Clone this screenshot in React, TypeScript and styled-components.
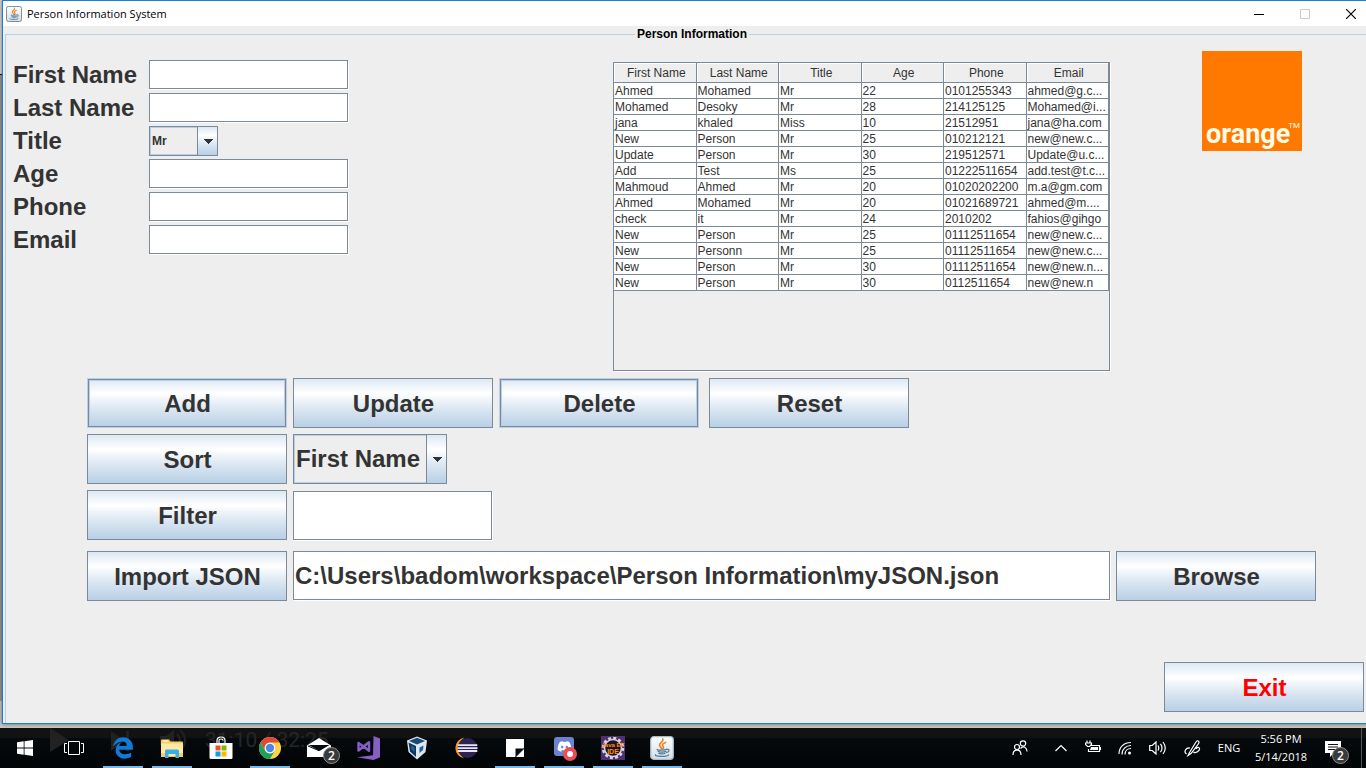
import React from "react";
import styled, { createGlobalStyle, css } from "styled-components";
import { FaDiscord, FaEdgeLegacy } from "react-icons/fa6";

const steel = "#7a8a99";
const sky = "#b8cfe5";
const panel = "#eeeeee";
const ink = "#333333";
const swing = `"Liberation Sans", Arial, sans-serif`;
const system = `"Open Sans", "Noto Sans", sans-serif`;
const ocean = `linear-gradient(#dde8f3, #ffffff 30%, #dde8f3 60%, ${sky})`;

const GlobalStyle = createGlobalStyle`
  * { box-sizing: border-box; }
  body { margin: 0; background: #bdbdbd; font-family: ${swing}; color: ${ink}; }
  button, input, select { font-family: inherit; color: inherit; margin: 0; border-radius: 0; }
`;

const Desktop = styled.div`
  display: flex;
  flex-direction: column;
  min-height: 100vh;
  overflow: hidden;
  padding-left: 2px;
  background: linear-gradient(#d8d8d8 74px, #111 74px, #111 75px, #999 75px, #999 701px, #c8c8c8 701px);
`;

/* The window runs past the right edge of the screen. */
const Window = styled.main`
  flex: 1;
  display: flex;
  flex-direction: column;
  margin: 0 -12px 4px 0;
  border: 1px solid #1a7fd4;
  border-right: 0;
  background: ${panel};
  box-shadow: 0 0 4px rgba(0, 0, 0, 0.5);
`;

const TitleBar = styled.header`
  display: flex;
  align-items: center;
  height: 25px;
  padding: 0 4px 0 3px;
  background: #fff;
`;

const WindowTitle = styled.h1`
  flex: 1;
  margin: 0 0 0 5px;
  font: 400 11px/16px ${system};
  color: #000;
`;

const WindowControl = styled.button`
  display: grid;
  place-items: center;
  width: 46px;
  height: 25px;
  padding: 0;
  border: 0;
  background: none;
`;

const Panel = styled.fieldset`
  flex: 1;
  display: flex;
  flex-direction: column;
  min-width: 0;
  margin: 0 0 0 2px;
  padding: 0;
  border: solid ${sky};
  border-width: 1px 0 0 1px;
`;

const PanelTitle = styled.legend`
  margin: 0 auto;
  padding: 0 2px;
  font: 700 12px/17px ${swing};
  color: #000;
`;

const Content = styled.div`
  flex: 1;
  display: flex;
  flex-direction: column;
  padding-bottom: 11px;
`;

const Overview = styled.section`
  display: flex;
  align-items: flex-start;
`;

const Form = styled.form`
  display: grid;
  grid-template-columns: 136px 200px;
  grid-auto-rows: 30px;
  row-gap: 3px;
  flex: 0 1 607px;
  margin-top: 17px;
  padding-left: 7px;
`;

const Label = styled.label`
  align-self: center;
  font: 700 24px/28px ${swing};
`;

const TextField = styled.input<{ $large?: boolean }>`
  width: ${(p) => (p.$large ? "auto" : "199px")};
  min-width: 0;
  height: 29px;
  padding: 0 1px;
  border: 1px solid ${steel};
  background: #fff;
  box-shadow: 1px 1px 0 #fff;
  outline: none;
  font-size: 12px;
  ${(p) =>
    p.$large &&
    css`
      flex: 1;
      height: 49px;
      font: 700 24px/28px ${swing};
    `}
`;

const FilterField = styled(TextField)`
  flex: 0 0 199px;
  align-self: flex-end;
`;

const Combo = styled.div<{ $large?: boolean }>`
  position: relative;
  width: ${(p) => (p.$large ? 154 : 69)}px;
  height: ${(p) => (p.$large ? 50 : 30)}px;
  border: 1px solid ${steel};
`;

const ComboSelect = styled.select<{ $large?: boolean }>`
  appearance: none;
  width: 100%;
  height: 100%;
  padding: 0 20px 0 1px;
  border: 1px solid ${sky};
  background: ${panel};
  outline: none;
  font: 700 ${(p) => (p.$large ? "24px/28px" : "12px/16px")} ${swing};
`;

const ComboArrow = styled.span`
  position: absolute;
  inset: 0 0 0 auto;
  display: grid;
  place-items: center;
  width: 20px;
  border-left: 1px solid ${steel};
  background: ${ocean};
  pointer-events: none;
`;

const TablePane = styled.div`
  flex: 0 1 497px;
  height: 309px;
  margin-top: 19px;
  border: 1px solid ${steel};
  box-shadow: 1px 1px 0 #fff;
  overflow: hidden;
`;

const Table = styled.table`
  width: 100%;
  table-layout: fixed;
  border-collapse: separate;
  border-spacing: 0;
  font-size: 12px;
  line-height: 13px;
`;

const HeadCell = styled.th`
  height: 20px;
  padding: 2px 0 0 3px;
  border: solid ${steel};
  border-width: 0 1px 1px 0;
  background: ${panel};
  box-shadow: inset 1px 1px 0 #fff;
  font-weight: 400;
`;

const Cell = styled.td`
  height: 16px;
  padding: 2px 0 0 1px;
  border: solid ${steel};
  border-width: 0 1px 1px 0;
  background: #fff;
  white-space: nowrap;
  overflow: hidden;
`;

const Logo = styled.div`
  display: flex;
  align-items: flex-end;
  width: 100px;
  height: 100px;
  margin: 8px 0 0 92px;
  padding: 0 0 1px 4px;
  background: #ff7900;
  color: #fffbe6;
  font: 700 27px/32px Roboto, sans-serif;
`;

const Trademark = styled.sup`
  margin: 0 0 18px -2px;
  font: 400 8px/12px Roboto, sans-serif;
`;

const Actions = styled.section`
  display: flex;
  flex-direction: column;
  gap: 6px;
  margin-top: 7px;
  padding: 0 62px 0 81px;
`;

const Row = styled.div<{ $wide?: boolean }>`
  display: flex;
  gap: ${(p) => (p.$wide ? 10 : 6)}px;
`;

const ImportRow = styled(Row)`
  margin-top: 5px;
`;

const Button = styled.button<{ $hot?: boolean; $danger?: boolean }>`
  flex: 0 0 200px;
  width: 200px;
  height: 50px;
  padding: 2px 0 0 1px;
  border: 1px solid ${steel};
  background: ${ocean};
  color: ${(p) => (p.$danger ? "#ff0000" : ink)};
  font: 700 24px/28px ${swing};
  ${(p) =>
    p.$hot &&
    css`
      border-color: ${sky};
      box-shadow: inset 0 0 0 1px ${steel}, inset 0 0 0 2px ${sky};
    `}
`;

const Footer = styled.footer`
  display: flex;
  justify-content: flex-end;
  margin-top: auto;
  padding: 61px 14px 0 0;

  ${Button} {
    flex: none;
  }
`;

const Taskbar = styled.nav`
  position: relative;
  display: flex;
  height: 40px;
  margin-left: -2px;
  background: linear-gradient(#121212 10px, #050a0e 10px, #020405);
  color: #fff;
  font-family: ${system};
`;

const Ghosts = styled.svg`
  position: absolute;
  inset: 0;
  width: 100%;
  height: 100%;
`;

const Apps = styled.div`
  position: relative;
  display: flex;
  gap: 1px;
  flex: 1;
  padding-left: 1px;
`;

const TaskButton = styled.button<{ $open?: boolean }>`
  position: relative;
  display: grid;
  place-items: center;
  width: 48px;
  height: 40px;
  padding: 0;
  border: 0;
  background: ${(p) =>
    p.$open ? "linear-gradient(#76b9ed, #76b9ed) center bottom / 40px 2px no-repeat" : "none"};
`;

const Badge = styled.span<{ $left: number }>`
  position: absolute;
  left: ${(p) => p.$left}px;
  bottom: 4px;
  width: 17px;
  height: 17px;
  border: 1px solid #8c8c8c;
  border-radius: 50%;
  background: #3a3a3a;
  color: #fff;
  font: 600 12px/15px ${system};
  text-align: center;
`;

const Tray = styled.div`
  position: relative;
  display: flex;
`;

const TrayItem = styled.button<{ $w?: number }>`
  position: relative;
  display: grid;
  place-items: center;
  width: ${(p) => p.$w ?? 32}px;
  height: 40px;
  padding: 0;
  border: 0;
  background: none;
  color: #fff;
  font: 400 11px/18px ${system};
`;

const Notifications = styled(TrayItem)`
  padding: 2px 10px 0 0;
`;

const ShowDesktop = styled.button`
  width: 5px;
  padding: 0;
  border: 0;
  border-left: 1px solid #555;
  background: none;
`;

const JavaIcon = ({ size }: { size: number }) => (
  <svg width={size} height={size} viewBox="0 0 24 24" fill="none">
    <defs>
      <linearGradient id={`java${size}`} x1="0" y1="0" x2="0" y2="1">
        <stop offset="0" stopColor="#fff" />
        <stop offset="1" stopColor="#d5dde4" />
      </linearGradient>
    </defs>
    <rect x="0.7" y="0.7" width="22.6" height="22.6" rx="3" fill={`url(#java${size})`} stroke={size < 20 ? "#5d7484" : "#a9bccb"} strokeWidth="1.2" />
    <path d="M12.8 3c1.4 2.4-4 4-3.3 6.300.3 1.300 1.800 2 2 3.300M15.600 6.400c-3.500 1.400-3.600 2.600-2.400 4.100.6.800.3 1.600-.5 2.200" stroke="#ee8122" strokeWidth="1.600" strokeLinecap="round" />
    <path d="M7.300 13.400c-2 .8 7.500 1 9.300-.1M8 15.200c.3 1.200 6.600 1.200 8 0M8.800 17.200c1 .8 5 .8 6.300 0M17 13.400c3-.5 2.600 2.500-.5 3.100M5.500 18.800c-1.500 2 12 2.200 13 .1" stroke="#4b7a9c" strokeWidth="1.200" strokeLinecap="round" />
  </svg>
);

const Arrow = () => (
  <svg width="10" height="5" viewBox="0 0 10 5" shapeRendering="crispEdges">
    <path d="M0 0h10L5 5z" fill={ink} />
  </svg>
);

const StartIcon = () => (
  <svg width="16" height="16" viewBox="0 0 16 16" fill="#fff">
    <path d="M0 2.300 6.700 1.300v6.200H0zM7.500 1.200 16 0v7.500H7.500zM0 8.400h6.700v6.300L0 13.700zM7.500 8.400H16V16l-8.500-1.200z" />
  </svg>
);

const TaskViewIcon = () => (
  <svg width="20" height="16" viewBox="0 0 20 16" fill="none" stroke="#fff">
    <path d="M4.500 1.500h11v13h-11zM3 3.500H.5v9H3M17 3.500h2.500v9H17" />
  </svg>
);

const ExplorerIcon = () => (
  <svg width="22" height="19" viewBox="0 0 22 19">
    <path d="M0 1.500Q0 .5 1 .5h7l1.500 2H21q1 0 1 1V18H0z" fill="#f5cf62" />
    <path d="M2 1.500h5v1H2z" fill="#fff" />
    <path d="M0 4.500h22V17H0z" fill="#ffe9a3" />
    <path d="M4 19v-7q0-1.500 1.500-1.500h11q1.500 0 1.500 1.500v7h-3.500v-4h-7v4z" fill="#3aaee6" />
    <path d="M0 14h4v4H0zM18 14h4v4h-4z" fill="#f5cf62" />
  </svg>
);

const StoreIcon = () => (
  <svg width="24" height="24" viewBox="0 0 24 24">
    <path d="M8 8V4.500C8 2.500 9.500 1 12 1s4 1.500 4 3.500V8M10 7V4.500c0-2 4-2 4 0" fill="none" stroke="#fff" strokeWidth="1.200" />
    <path d="M.5 7h23v14.500q0 1.500-1.500 1.500H2Q.5 23 .5 21.500z" fill="#fff" />
    <path d="M6.500 9.500h5v5h-5z" fill="#f25022" />
    <path d="M12.500 9.500h5v5h-5z" fill="#7fba00" />
    <path d="M6.500 15.500h5v5h-5z" fill="#00a4ef" />
    <path d="M12.500 15.500h5v5h-5z" fill="#ffb900" />
  </svg>
);

const ChromeIcon = () => (
  <svg width="22" height="22" viewBox="0 0 22 22">
    <circle cx="11" cy="11" r="11" fill="#fdd349" />
    <path d="M1.500 5.500A11 11 0 0 1 20.530 5.500H11A5.500 5.500 0 0 0 6.240 13.750z" fill="#db4a3b" />
    <path d="M1.470 5.500A11 11 0 0 0 11 22l4.760-8.250A5.500 5.500 0 0 1 6.240 13.750z" fill="#1fa15d" />
    <circle cx="11" cy="11" r="5.200" fill="#fff" />
    <circle cx="11" cy="11" r="4.200" fill="#4a87e8" />
  </svg>
);

const MailIcon = () => (
  <svg width="24" height="20" viewBox="0 0 24 20">
    <path d="M0 7.500 12 0l12 7.500V19H0z" fill="#fff" />
    <path d="M1.500 7h21L12.500 13z" fill="#060b0f" />
    <path d="M12 12.700 1 8" stroke="#060b0f" />
  </svg>
);

const VisualStudioIcon = () => (
  <svg width="24" height="24" viewBox="0 0 24 24">
    <path d="M17.500 0 24 2.500v18.800L17.500 24 1 21.200l16-2z" fill="#865fc5" />
    <path d="M2.500 7v7.500l5-4zM13 6.300v8.500l-5.500-4.300z" fill="none" stroke="#865fc5" strokeWidth="2.400" strokeLinejoin="round" />
  </svg>
);

const VirtualBoxIcon = () => (
  <svg width="22" height="24" viewBox="0 0 22 24">
    <path d="M11 .5 21 4.500 19.500 16 11 23.500 2.500 16 1 4.500z" fill="#dfe8ef" />
    <path d="M11 1.800 19 4.900 11 8.600 3 4.900z" fill="#164a7c" />
    <path d="M2.500 6.500 10 10v11L4 15.500z" fill="#0d3763" />
    <path d="M19.500 6.500 12 10v11l6-5.500z" fill="#dbe6ee" />
    <path d="m5 9.500 3.500 1.700V16L5.500 13.500z" fill="#2a5f90" />
    <path d="m17.500 9.500-4 2V17l3.500-3z" fill="#2a5f90" />
  </svg>
);

const EclipseIcon = () => (
  <svg width="24" height="22" viewBox="0 0 24 22">
    <path d="M10.500.5A10.600 10.600 0 0 0 10.500 21.500 12.500 12.500 0 0 1 10.500.5z" fill="#f7941e" />
    <circle cx="13.500" cy="11" r="10" fill="#2c2255" />
    <path d="M3.700 7.300h19.600v1.800H3.700zM3.500 10.200h20V12h-20zM3.700 13.100h19.600v1.800H3.700z" fill="#e9e6f4" />
  </svg>
);

const StickyIcon = () => (
  <svg width="18" height="18" viewBox="0 0 18 18">
    <path d="M0 0h18v9l-9 9H0z" fill="#fff" />
    <path d="M9.500 18V9.500H18z" fill="#060b0f" />
    <path d="M18 10v8h-8z" fill="#fff" />
  </svg>
);

const DiscordTile = styled.span`
  position: relative;
  display: grid;
  place-items: center;
  width: 20px;
  height: 19px;
  margin-bottom: 3px;
  border-radius: 3px;
  background: #6d82d0;
  color: #fff;
`;

const RecordDot = styled.span`
  position: absolute;
  right: -3px;
  bottom: -5px;
  width: 14px;
  height: 14px;
  border: 4px solid #ee4c55;
  border-radius: 50%;
  background: #fff;
`;

const JavaEeIcon = () => (
  <svg width="24" height="24" viewBox="0 0 24 24">
    <rect width="24" height="24" fill="#4d2f73" />
    <circle cx="12" cy="12" r="10" fill="none" stroke="#d9d5dd" strokeWidth="2.500" strokeDasharray="3 2.230" />
    <circle cx="12" cy="12" r="8.500" fill="#1d1522" stroke="#d9d5dd" strokeWidth="1.500" />
    <text x="12" y="11" textAnchor="middle" fontFamily="Liberation Sans, sans-serif" fontWeight="700" fontSize="6" fill="#ff8a1e">Java EE</text>
    <text x="12" y="18" textAnchor="middle" fontFamily="Liberation Sans, sans-serif" fontWeight="700" fontSize="7" fill="#ff8a1e">IDE</text>
  </svg>
);

const TrayIcon = ({ w = 16, h = 16, children }: { w?: number; h?: number; children: React.ReactNode }) => (
  <svg width={w} height={h} viewBox={`0 0 ${w} ${h}`} fill="none" stroke="#fff" strokeWidth="1.200">
    {children}
  </svg>
);

const columns = ["First Name", "Last Name", "Title", "Age", "Phone", "Email"];

const people = [
  ["Ahmed", "Mohamed", "Mr", "22", "0101255343", "ahmed@g.c..."],
  ["Mohamed", "Desoky", "Mr", "28", "214125125", "Mohamed@i..."],
  ["jana", "khaled", "Miss", "10", "21512951", "jana@ha.com"],
  ["New", "Person", "Mr", "25", "010212121", "new@new.c..."],
  ["Update", "Person", "Mr", "30", "219512571", "Update@u.c..."],
  ["Add", "Test", "Ms", "25", "01222511654", "add.test@t.c..."],
  ["Mahmoud", "Ahmed", "Mr", "20", "01020202200", "m.a@gm.com"],
  ["Ahmed", "Mohamed", "Mr", "20", "01021689721", "ahmed@m...."],
  ["check", "it", "Mr", "24", "2010202", "fahios@gihgo"],
  ["New", "Person", "Mr", "25", "01112511654", "new@new.c..."],
  ["New", "Personn", "Mr", "25", "01112511654", "new@new.c..."],
  ["New", "Person", "Mr", "30", "01112511654", "new@new.n..."],
  ["New", "Person", "Mr", "30", "0112511654", "new@new.n"],
];

const apps: { name: string; icon: React.ReactNode; open?: boolean }[] = [
  { name: "Start", icon: <StartIcon /> },
  { name: "Task View", icon: <TaskViewIcon /> },
  { name: "Edge", icon: <FaEdgeLegacy size={22} color="#0f7ad8" />, open: true },
  { name: "File Explorer", icon: <ExplorerIcon />, open: true },
  { name: "Store", icon: <StoreIcon /> },
  { name: "Chrome", icon: <ChromeIcon />, open: true },
  { name: "Mail", icon: <><MailIcon /><Badge $left={28}>2</Badge></> },
  { name: "Visual Studio", icon: <VisualStudioIcon /> },
  { name: "VirtualBox", icon: <VirtualBoxIcon /> },
  { name: "Eclipse", icon: <EclipseIcon /> },
  { name: "Sticky Notes", icon: <StickyIcon />, open: true },
  { name: "Discord", icon: <DiscordTile><FaDiscord size={15} /><RecordDot /></DiscordTile>, open: true },
  { name: "Java EE IDE", icon: <JavaEeIcon />, open: true },
  { name: "Java", icon: <JavaIcon size={24} />, open: true },
];

export default function App() {
  return (
    <>
      <GlobalStyle />
      <Desktop>
        <Window>
          <TitleBar>
            <JavaIcon size={16} />
            <WindowTitle>Person Information System</WindowTitle>
            <WindowControl aria-label="Minimize">
              <svg width="10" height="10" stroke="#000"><path d="M0 5.500h10" /></svg>
            </WindowControl>
            <WindowControl aria-label="Maximize" disabled>
              <svg width="10" height="10" fill="none" stroke="#ccc"><path d="M.5.500h9v9h-9z" /></svg>
            </WindowControl>
            <WindowControl aria-label="Close">
              <svg width="10" height="10" stroke="#000" strokeWidth="1.200"><path d="m0 0 10 10M10 0 0 10" /></svg>
            </WindowControl>
          </TitleBar>

          <Panel>
            <PanelTitle>Person Information</PanelTitle>
            <Content>
              <Overview>
                <Form>
                  <Label htmlFor="first">First Name</Label>
                  <TextField id="first" />
                  <Label htmlFor="last">Last Name</Label>
                  <TextField id="last" />
                  <Label htmlFor="title">Title</Label>
                  <Combo>
                    <ComboSelect id="title" defaultValue="Mr">
                      <option>Mr</option>
                      <option>Ms</option>
                      <option>Miss</option>
                    </ComboSelect>
                    <ComboArrow><Arrow /></ComboArrow>
                  </Combo>
                  <Label htmlFor="age">Age</Label>
                  <TextField id="age" />
                  <Label htmlFor="phone">Phone</Label>
                  <TextField id="phone" />
                  <Label htmlFor="email">Email</Label>
                  <TextField id="email" />
                </Form>
                <TablePane>
                  <Table>
                    <thead>
                      <tr>{columns.map((c) => <HeadCell key={c} scope="col">{c}</HeadCell>)}</tr>
                    </thead>
                    <tbody>
                      {people.map((person, i) => (
                        <tr key={i}>{person.map((value, j) => <Cell key={j}>{value}</Cell>)}</tr>
                      ))}
                    </tbody>
                  </Table>
                </TablePane>
                <Logo>orange<Trademark>TM</Trademark></Logo>
              </Overview>

              <Actions>
                <Row $wide>
                  <Row>
                    <Button $hot>Add</Button>
                    <Button>Update</Button>
                    <Button $hot>Delete</Button>
                  </Row>
                  <Button>Reset</Button>
                </Row>
                <Row>
                  <Button>Sort</Button>
                  <Combo $large>
                    <ComboSelect $large aria-label="Sort by" defaultValue="First Name">
                      {columns.map((c) => <option key={c}>{c}</option>)}
                    </ComboSelect>
                    <ComboArrow><Arrow /></ComboArrow>
                  </Combo>
                </Row>
                <Row>
                  <Button>Filter</Button>
                  <FilterField $large aria-label="Filter text" />
                </Row>
                <ImportRow>
                  <Button>Import JSON</Button>
                  <TextField
                    $large
                    aria-label="JSON file"
                    defaultValue={"C:\\Users\\badom\\workspace\\Person Information\\myJSON.json"}
                  />
                  <Button>Browse</Button>
                </ImportRow>
              </Actions>

              <Footer>
                <Button $danger>Exit</Button>
              </Footer>
            </Content>
          </Panel>
        </Window>

        <Taskbar>
          <Ghosts aria-hidden="true">
            <path d="M50 0 69 12 50 24zM111 3l14 10-14 10zM126 3h3v20h-3zM160 8h6l8-6v21l-8-6h-6z" fill="#222" />
            <path d="M177 6q6 6 0 13M180 2q10 10 0 21" fill="none" stroke="#222" strokeWidth="2" />
            <text x="205" y="19" fontFamily="Roboto, sans-serif" fontSize="21" fill="#262626">31:10 / 32:25</text>
          </Ghosts>
          <Apps>
            {apps.map((app) => (
              <TaskButton key={app.name} $open={app.open} aria-label={app.name}>{app.icon}</TaskButton>
            ))}
          </Apps>
          <Tray>
            <TrayItem $w={50} aria-label="People">
              <TrayIcon>
                <circle cx="5" cy="7" r="2.500" /><path d="M1 15c0-6.500 8-6.500 8 0" />
                <circle cx="11" cy="3.500" r="2.700" /><path d="M8.500 8.500c3-3.500 6.500-1 6.500 3" />
              </TrayIcon>
            </TrayItem>
            <TrayItem aria-label="Hidden icons">
              <TrayIcon w={12} h={8}><path d="m.5 7 5.500-5.500L11.500 7" /></TrayIcon>
            </TrayItem>
            <TrayItem aria-label="Battery">
              <TrayIcon>
                <path d="M5.500 5.500h9v6H3.500V9M2 .5v2M5 .5v2M.5 3h6v1.500l-2 2h-2l-2-2zM15.500 7v3" />
                <path d="M6 7h7v3H5z" fill="#fff" stroke="none" />
              </TrayIcon>
            </TrayItem>
            <TrayItem aria-label="Wi-Fi">
              <TrayIcon w={14} h={14}>
                <path d="M1 13C1 6 6 1.500 13 1.500M4 13.500C4 8 8 4.500 13 4.500M7 13.500c0-3.500 2.500-6 6-6" />
                <circle cx="11.500" cy="12" r="1.500" fill="#fff" stroke="none" />
              </TrayIcon>
            </TrayItem>
            <TrayItem aria-label="Volume">
              <TrayIcon w={17} h={14}>
                <path d="M.7 4.500h2.500L7 1v12L3.200 9.500H.7zM9 4.500q1.500 2.500 0 5M11.500 2.800q3 4.200 0 8.400M14 1q4.500 6 0 12" />
              </TrayIcon>
            </TrayItem>
            <TrayItem $w={38} aria-label="Ink workspace">
              <TrayIcon w={17} h={17}>
                <path d="M5.500 12.500 12 2q1.500-2 2.500-.8t-.2 2.800L7 13.500l-3 2zM6 8C1.500 7.500-.5 12 2.500 14M9.500 12c2 2 6.500-1.500 6-3.500s-3-1-3.500.5" />
              </TrayIcon>
            </TrayItem>
            <TrayItem $w={36}>ENG</TrayItem>
            <TrayItem $w={68}>
              <span>5:56 PM<br />5/14/2018</span>
            </TrayItem>
            <Notifications $w={46} aria-label="Notifications">
              <svg width="16" height="16" viewBox="0 0 16 16">
                <path d="M0 0h16v12H9l-4 4v-4H0z" fill="#fff" />
                <path d="M3 3.500h10M3 6h10M3 8.500h7" stroke="#111" />
              </svg>
              <Badge $left={17}>2</Badge>
            </Notifications>
            <ShowDesktop aria-label="Show desktop" />
          </Tray>
        </Taskbar>
      </Desktop>
    </>
  );
}
